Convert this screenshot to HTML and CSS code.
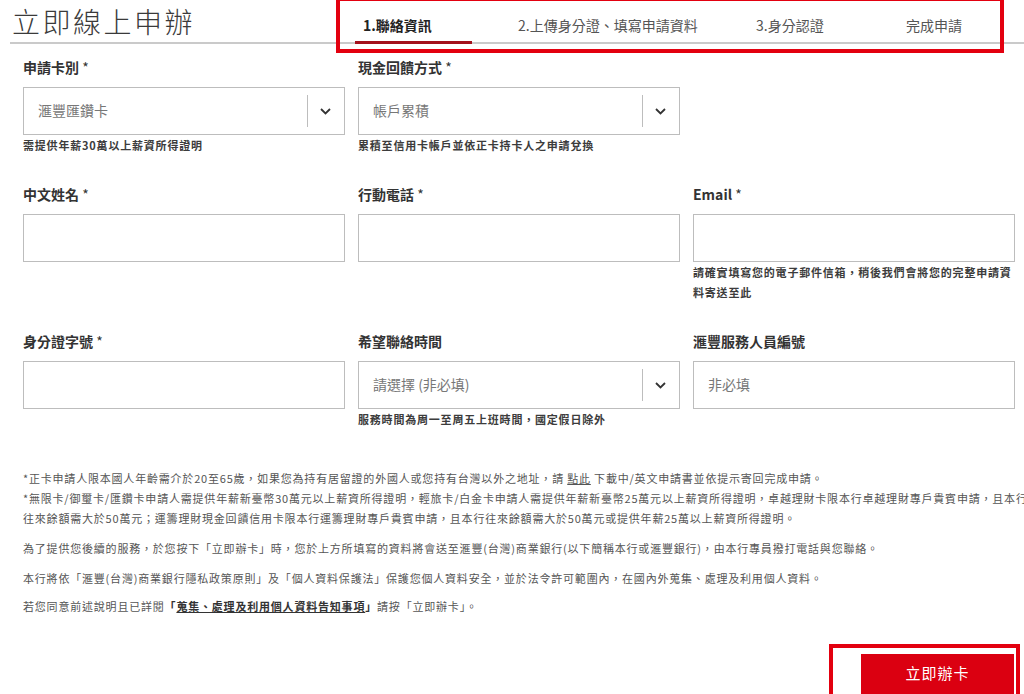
FILE: index.html
```html
<!DOCTYPE html>
<html lang="zh-Hant">
<head>
<meta charset="utf-8">
<title>立即線上申辦</title>
<link rel="stylesheet" href="styles.css">
</head>
<body>
<div class="page">
  <header class="top">
    <h1 class="title">立即線上申辦</h1>
    <nav class="steps">
      <span class="step step-1 active">1.聯絡資訊</span>
      <span class="step step-2">2.上傳身分證、填寫申請資料</span>
      <span class="step step-3">3.身分認證</span>
      <span class="step step-4">完成申請</span>
      <span class="mark mark-steps"></span>
    </nav>
  </header>

  <form class="form">
    <div class="field">
      <label class="label">申請卡別 <span class="req">*</span></label>
      <div class="box select">
        <span class="value">滙豐匯鑽卡</span>
        <span class="arrow"><svg width="11" height="7" viewBox="0 0 11 7"><path d="M1 1 L5.5 5.5 L10 1" fill="none" stroke="#333" stroke-width="1.8"/></svg></span>
      </div>
      <p class="help">需提供年薪30萬以上薪資所得證明</p>
    </div>
    <div class="field">
      <label class="label">現金回饋方式 <span class="req">*</span></label>
      <div class="box select">
        <span class="value">帳戶累積</span>
        <span class="arrow"><svg width="11" height="7" viewBox="0 0 11 7"><path d="M1 1 L5.5 5.5 L10 1" fill="none" stroke="#333" stroke-width="1.8"/></svg></span>
      </div>
      <p class="help">累積至信用卡帳戶並依正卡持卡人之申請兌換</p>
    </div>
    <div class="field"></div>

    <div class="field">
      <label class="label">中文姓名 <span class="req">*</span></label>
      <div class="box"></div>
    </div>
    <div class="field">
      <label class="label">行動電話 <span class="req">*</span></label>
      <div class="box"></div>
    </div>
    <div class="field">
      <label class="label">Email <span class="req">*</span></label>
      <div class="box"></div>
      <p class="help">請確實填寫您的電子郵件信箱，稍後我們會將您的完整申請資料寄送至此</p>
    </div>

    <div class="field">
      <label class="label">身分證字號 <span class="req">*</span></label>
      <div class="box"></div>
    </div>
    <div class="field">
      <label class="label">希望聯絡時間</label>
      <div class="box select">
        <span class="value">請選擇 (非必填)</span>
        <span class="arrow"><svg width="11" height="7" viewBox="0 0 11 7"><path d="M1 1 L5.5 5.5 L10 1" fill="none" stroke="#333" stroke-width="1.8"/></svg></span>
      </div>
      <p class="help">服務時間為周一至周五上班時間，國定假日除外</p>
    </div>
    <div class="field">
      <label class="label">滙豐服務人員編號</label>
      <div class="box"><span class="value">非必填</span></div>
    </div>
  </form>

  <section class="notes">
    <p class="note tight">*正卡申請人限本國人年齡需介於20至65歲，如果您為持有居留證的外國人或您持有台灣以外之地址，請 <a class="link">點此</a> 下載中/英文申請書並依提示寄回完成申請。</p>
    <p class="note">*無限卡/御璽卡/匯鑽卡申請人需提供年薪新臺幣30萬元以上薪資所得證明，輕旅卡/白金卡申請人需提供年薪新臺幣25萬元以上薪資所得證明，卓越理財卡限本行卓越理財專戶貴賓申請，且本行<br>往來餘額需大於50萬元；運籌理財現金回饋信用卡限本行運籌理財專戶貴賓申請，且本行往來餘額需大於50萬元或提供年薪25萬以上薪資所得證明。</p>
    <p class="note">為了提供您後續的服務，於您按下「立即辦卡」時，您於上方所填寫的資料將會送至滙豐(台灣)商業銀行(以下簡稱本行或滙豐銀行)，由本行專員撥打電話與您聯絡。</p>
    <p class="note">本行將依「滙豐(台灣)商業銀行隱私政策原則」及「個人資料保護法」保護您個人資料安全，並於法令許可範圍內，在國內外蒐集、處理及利用個人資料。</p>
    <p class="note last">若您同意前述說明且已詳閱<strong>「<a class="link">蒐集、處理及利用個人資料告知事項</a>」</strong>請按「立即辦卡」。</p>
  </section>

  <div class="actions">
    <button class="submit" type="button">立即辦卡</button>
  </div>
</div>
</body>
</html>
```
FILE: styles.css
```css
html, body {
  margin: 0;
  padding: 0;
  background: #fff;
  overflow: hidden;
}
body {
  font-family: "Noto Sans CJK TC", "Liberation Sans", sans-serif;
  color: #333;
  width: 1024px;
  height: 694px;
}
.page {
  position: relative;
}
.top {
  display: grid;
  grid-template-columns: 345px 1fr;
  margin-left: 10px;
  height: 42px;
  border-bottom: 2px solid #cacaca;
}
.title {
  margin: 0;
  padding-left: 2px;
  font-size: 28px;
  font-weight: 200;
  letter-spacing: 2.5px;
  line-height: 42px;
  color: #3a3a3a;
}
.steps {
  position: relative;
  display: grid;
  grid-template-columns: 117px 284px 150px 1fr;
  align-items: stretch;
}
.step {
  font-size: 14px;
  line-height: 34px;
  padding-top: 8px;
  color: #555;
  white-space: nowrap;
}
.step-1 {
  padding-left: 8px;
  color: #222;
  font-weight: 700;
}
.step-2 { padding-left: 46px; }
.active {
  border-bottom: 3px solid #a4111c;
  margin-bottom: -2px;
  height: 33px;
}
.mark {
  position: absolute;
  border: 4px solid #e3000f;
  box-sizing: border-box;
  pointer-events: none;
}
.mark-steps {
  left: -19px;
  top: -3px;
  width: 668px;
  height: 56px;
}
.form {
  display: grid;
  grid-template-columns: repeat(3, 322px);
  column-gap: 13px;
  row-gap: 29px;
  margin: 13px 0 0 23px;
  align-items: start;
}
.label {
  display: block;
  font-size: 14px;
  font-weight: 700;
  line-height: 20px;
  margin-bottom: 10px;
  color: #333;
}
.req {
  font-weight: 400;
}
.box {
  box-sizing: border-box;
  height: 48px;
  border: 1px solid #bdbdbd;
  display: flex;
  align-items: center;
  padding-left: 14px;
}
.value {
  flex: 1;
  font-size: 14px;
  line-height: 20px;
  padding-bottom: 3px;
  color: #777;
}
.arrow {
  position: relative;
  width: 37px;
  align-self: stretch;
  display: flex;
  align-items: center;
  justify-content: center;
}
.arrow::before {
  content: "";
  position: absolute;
  left: 0;
  top: 7px;
  bottom: 7px;
  border-left: 1px solid #bdbdbd;
}
.help {
  margin: 0;
  font-size: 11px;
  font-weight: 700;
  letter-spacing: 0.8px;
  line-height: 20px;
  color: #3c3c3c;
}
.notes {
  margin: 39px 0 0 23px;
}
.note {
  margin: 0 0 10px;
  font-size: 11px;
  letter-spacing: 0.8px;
  line-height: 20px;
  color: #555;
  white-space: nowrap;
}
.note.tight {
  margin-bottom: 0;
}
.note.last {
  margin-top: -2px;
}
.note strong {
  color: #333;
}
.link {
  text-decoration: underline;
  color: inherit;
}
.actions {
  display: flex;
  justify-content: flex-end;
  padding-right: 10px;
  margin-top: 38px;
}
.submit {
  position: relative;
  width: 153px;
  height: 42px;
  border: none;
  background: #db0011;
  color: #fff;
  font-family: "Noto Sans CJK TC", "Liberation Sans", sans-serif;
  font-size: 15px;
  letter-spacing: 1px;
  line-height: 38px;
  padding: 0 0 4px;
  display: block;
}
.submit::before {
  content: "";
  position: absolute;
  left: -32px;
  top: -10px;
  right: -6px;
  bottom: -12px;
  border: 4px solid #e3000f;
  pointer-events: none;
}
```
